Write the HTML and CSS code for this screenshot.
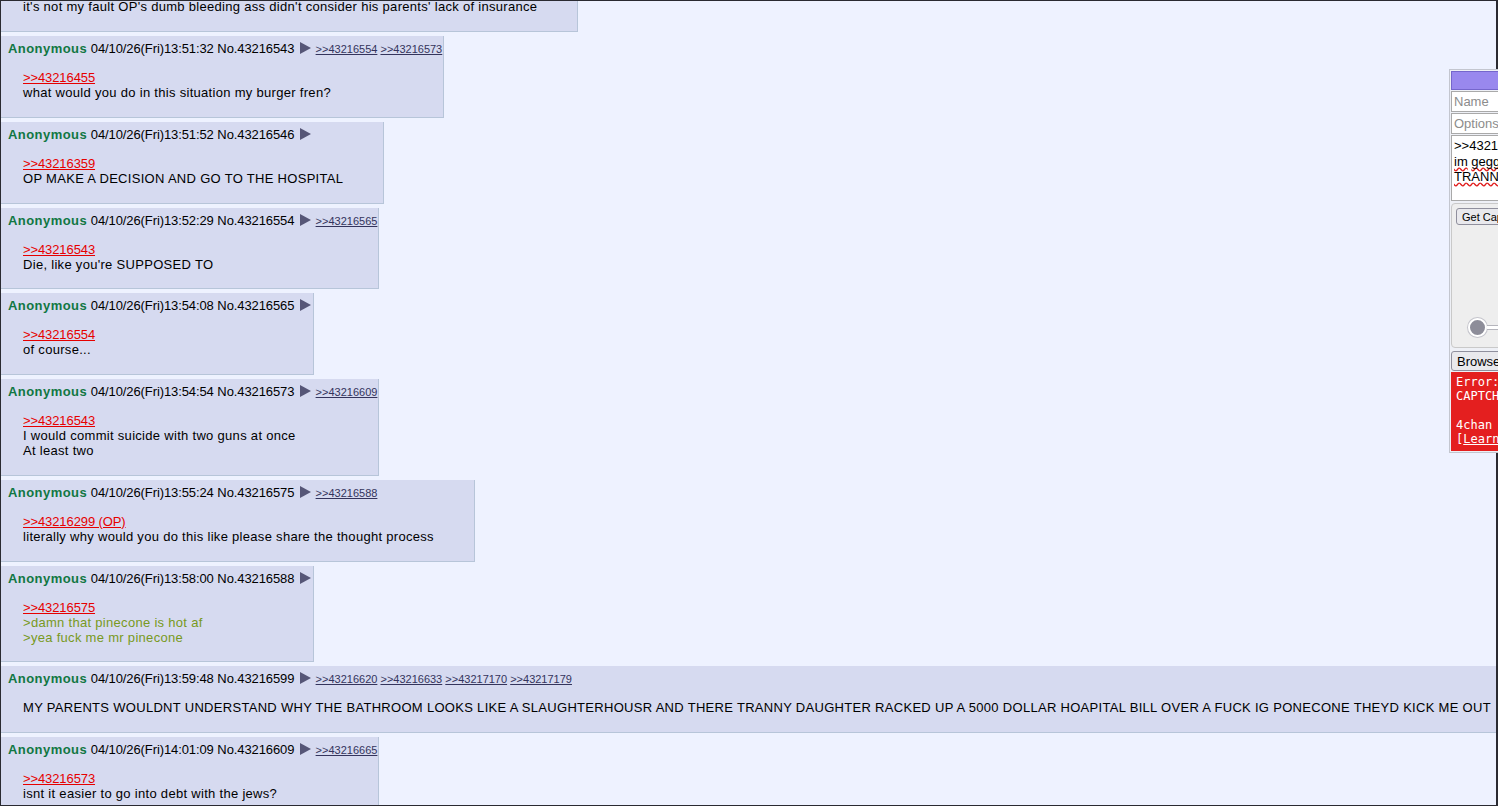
FILE: index.html
```html
<!DOCTYPE html>
<html lang="en">
    <head>
        <meta charset="UTF-8" />
        <meta name="viewport" content="width=device-width, initial-scale=1.0" />
        <title>/b/ - Random</title>
        <link rel="stylesheet" href="styles.css">
    </head>
    <body>
        <div class="page">
            <div class="thread">
                <div class="reply-wrap">
                    <div class="post">
                        <div class="post-info">
                            <span class="name">Anonymous</span>
                            <span class="date-time">04/10/26(Fri)13:50:58</span>
                            <span class="post-num">No.43216538</span>
                            <span class="menu-btn"></span>
                        </div>
                        <blockquote class="post-message">it's not my fault OP's dumb bleeding ass didn't consider his parents' lack of insurance</blockquote>
                    </div>
                </div>

                <div class="reply-wrap">
                    <div class="post">
                        <div class="post-info">
                            <span class="name">Anonymous</span>
                            <span class="date-time">04/10/26(Fri)13:51:32</span>
                            <span class="post-num">No.43216543</span>
                            <span class="menu-btn"></span>
                            <span class="backlinks"><a href="#p43216554">&gt;&gt;43216554</a> <a href="#p43216573">&gt;&gt;43216573</a></span>
                        </div>
                        <blockquote class="post-message">
                            <a class="quote-link" href="#p43216455">&gt;&gt;43216455</a><br>
                            what would you do in this situation my burger fren?
                        </blockquote>
                    </div>
                </div>

                <div class="reply-wrap">
                    <div class="post">
                        <div class="post-info">
                            <span class="name">Anonymous</span>
                            <span class="date-time">04/10/26(Fri)13:51:52</span>
                            <span class="post-num">No.43216546</span>
                            <span class="menu-btn"></span>
                        </div>
                        <blockquote class="post-message">
                            <a class="quote-link" href="#p43216359">&gt;&gt;43216359</a><br>
                            OP MAKE A DECISION AND GO TO THE HOSPITAL
                        </blockquote>
                    </div>
                </div>

                <div class="reply-wrap">
                    <div class="post">
                        <div class="post-info">
                            <span class="name">Anonymous</span>
                            <span class="date-time">04/10/26(Fri)13:52:29</span>
                            <span class="post-num">No.43216554</span>
                            <span class="menu-btn"></span>
                            <span class="backlinks"><a href="#p43216565">&gt;&gt;43216565</a></span>
                        </div>
                        <blockquote class="post-message">
                            <a class="quote-link" href="#p43216543">&gt;&gt;43216543</a><br>
                            Die, like you're SUPPOSED TO
                        </blockquote>
                    </div>
                </div>

                <div class="reply-wrap">
                    <div class="post">
                        <div class="post-info">
                            <span class="name">Anonymous</span>
                            <span class="date-time">04/10/26(Fri)13:54:08</span>
                            <span class="post-num">No.43216565</span>
                            <span class="menu-btn"></span>
                        </div>
                        <blockquote class="post-message">
                            <a class="quote-link" href="#p43216554">&gt;&gt;43216554</a><br>
                            of course...
                        </blockquote>
                    </div>
                </div>

                <div class="reply-wrap">
                    <div class="post">
                        <div class="post-info">
                            <span class="name">Anonymous</span>
                            <span class="date-time">04/10/26(Fri)13:54:54</span>
                            <span class="post-num">No.43216573</span>
                            <span class="menu-btn"></span>
                            <span class="backlinks"><a href="#p43216609">&gt;&gt;43216609</a></span>
                        </div>
                        <blockquote class="post-message">
                            <a class="quote-link" href="#p43216543">&gt;&gt;43216543</a><br>
                            I would commit suicide with two guns at once<br>
                            At least two
                        </blockquote>
                    </div>
                </div>

                <div class="reply-wrap">
                    <div class="post">
                        <div class="post-info">
                            <span class="name">Anonymous</span>
                            <span class="date-time">04/10/26(Fri)13:55:24</span>
                            <span class="post-num">No.43216575</span>
                            <span class="menu-btn"></span>
                            <span class="backlinks"><a href="#p43216588">&gt;&gt;43216588</a></span>
                        </div>
                        <blockquote class="post-message">
                            <a class="quote-link" href="#p43216299">&gt;&gt;43216299 (OP)</a><br>
                            literally why would you do this like please share the thought process
                        </blockquote>
                    </div>
                </div>

                <div class="reply-wrap">
                    <div class="post">
                        <div class="post-info">
                            <span class="name">Anonymous</span>
                            <span class="date-time">04/10/26(Fri)13:58:00</span>
                            <span class="post-num">No.43216588</span>
                            <span class="menu-btn"></span>
                        </div>
                        <blockquote class="post-message">
                            <a class="quote-link" href="#p43216575">&gt;&gt;43216575</a><br>
                            <span class="greentext">&gt;damn that pinecone is hot af</span><br>
                            <span class="greentext">&gt;yea fuck me mr pinecone</span>
                        </blockquote>
                    </div>
                </div>

                <div class="reply-wrap">
                    <div class="post">
                        <div class="post-info">
                            <span class="name">Anonymous</span>
                            <span class="date-time">04/10/26(Fri)13:59:48</span>
                            <span class="post-num">No.43216599</span>
                            <span class="menu-btn"></span>
                            <span class="backlinks"><a href="#p43216620">&gt;&gt;43216620</a> <a href="#p43216633">&gt;&gt;43216633</a> <a href="#p43217170">&gt;&gt;43217170</a> <a href="#p43217179">&gt;&gt;43217179</a></span>
                        </div>
                        <blockquote class="post-message">MY PARENTS WOULDNT UNDERSTAND WHY THE BATHROOM LOOKS LIKE A SLAUGHTERHOUSR AND THERE TRANNY DAUGHTER RACKED UP A 5000 DOLLAR HOAPITAL BILL OVER A FUCK IG PONECONE THEYD KICK ME OUT</blockquote>
                    </div>
                </div>

                <div class="reply-wrap">
                    <div class="post">
                        <div class="post-info">
                            <span class="name">Anonymous</span>
                            <span class="date-time">04/10/26(Fri)14:01:09</span>
                            <span class="post-num">No.43216609</span>
                            <span class="menu-btn"></span>
                            <span class="backlinks"><a href="#p43216665">&gt;&gt;43216665</a></span>
                        </div>
                        <blockquote class="post-message">
                            <a class="quote-link" href="#p43216573">&gt;&gt;43216573</a><br>
                            isnt it easier to go into debt with the jews?
                        </blockquote>
                    </div>
                </div>
            </div>
        </div>

        <!-- Quick Reply -->
        <div class="quick-reply">
            <div class="qr-header"></div>
            <div class="qr-field qr-placeholder">Name</div>
            <div class="qr-field qr-placeholder">Options</div>
            <div class="qr-comment">&gt;&gt;43216599<br><span class="misspelled">im</span> <span class="misspelled">gegging</span><br><span class="misspelled">TRANNY</span></div>
            <div class="qr-captcha">
                <button class="qr-button qr-small">Get Captcha</button>
                <div class="qr-slider">
                    <span class="qr-knob"></span>
                    <span class="qr-track"></span>
                </div>
            </div>
            <button class="qr-button qr-browse">Browse...</button>
            <div class="qr-error">Error: You seem to have mistyped the
CAPTCHA. Please try again.

4chan Pass users can bypass this CAPTCHA.
[<a href="#">Learn More</a>]</div>
        </div>
    </body>
</html>
```

FILE: styles.css
```css
html,
body {
    margin: 0;
    height: 100%;
    overflow: hidden;
}

body {
    background: #eef2ff;
    color: #000;
    font-family: "Liberation Sans", Arial, sans-serif;
    font-size: 13px;
}

/* Window frame */
.page {
    box-sizing: border-box;
    height: 100%;
    border-style: solid;
    border-color: #2a2a31;
    border-width: 1px 2px 1px 1px;
    overflow: hidden;
}

/* Thread, scrolled part way down */
.thread {
    margin-top: -35.75px;
}

.reply-wrap {
    margin-bottom: 4px;
}

.post {
    width: max-content;
    background: #d6daf0;
    border-right: 1px solid #b7c5d9;
    border-bottom: 1px solid #b7c5d9;
}

/* Post header */
.post-info {
    line-height: 18px;
    padding: 4px 1px 0 7px;
    white-space: nowrap;
}

.name {
    color: #117743;
    font-weight: bold;
    letter-spacing: 0.45px;
}

.date-time,
.post-num {
    letter-spacing: -0.1px;
}

.menu-btn {
    display: inline-block;
    width: 0;
    height: 0;
    margin: 0 1px 0 2px;
    border-left: 11px solid #565677;
    border-top: 6px solid transparent;
    border-bottom: 6px solid transparent;
    vertical-align: -1px;
}

.backlinks {
    font-size: 11px;
    line-height: 12px;
}

.backlinks a {
    color: #34345c;
}

/* Post body */
.post-message {
    margin: 12px 40px 16.75px 22px;
    line-height: 15px;
    letter-spacing: 0.3px;
}

.quote-link {
    color: #e60000;
    letter-spacing: -0.1px;
}

.greentext {
    color: #789922;
}

/* Quick Reply Style */
.quick-reply {
    position: fixed;
    top: 69px;
    left: 1449px;
    width: 300px;
    padding: 1px;
    background: #eef0f6;
    border: 1px solid #c3c6cf;
}

.qr-header {
    height: 17px;
    background: #9988ee;
    border: 1px solid #7566cc;
}

.qr-field {
    box-sizing: border-box;
    height: 21px;
    margin-top: 1px;
    padding: 2px 2px;
    line-height: 15px;
    background: #fff;
    border: 1px solid #a9a9a9;
}

.qr-placeholder {
    color: #8c8c8c;
}

.qr-comment {
    box-sizing: border-box;
    height: 66px;
    margin-top: 1px;
    padding: 2px 2px;
    line-height: 15.5px;
    background: #fff;
    border: 1px solid #a9a9a9;
}

.misspelled {
    text-decoration: underline wavy #e01b1b;
    text-decoration-skip-ink: none;
}

.qr-captcha {
    box-sizing: border-box;
    height: 145px;
    margin-top: 2px;
    padding: 4px 4px;
    background: #eeeeee;
    border: 1px solid #c9c9c9;
    border-radius: 4px;
}

.qr-button {
    display: block;
    box-sizing: border-box;
    margin: 0;
    padding: 0 5px;
    font-family: "Liberation Sans", Arial, sans-serif;
    color: #000;
    background: #e9e9ed;
    border: 1px solid #8f8f9d;
    border-radius: 3px;
}

.qr-small {
    height: 17px;
    font-size: 11px;
}

.qr-slider {
    display: flex;
    align-items: center;
    margin-top: 93px;
    padding-left: 12px;
}

.qr-knob {
    width: 15px;
    height: 15px;
    background: #8d8d99;
    border: 2px solid #fff;
    border-radius: 50%;
    box-shadow: 0 0 0 1px #c5c5cc;
}

.qr-track {
    flex: 1;
    height: 3px;
    background: #fff;
    border: 1px solid #b5b5bc;
    border-left: 0;
}

.qr-browse {
    width: 100%;
    height: 20px;
    margin-top: 3px;
    padding: 0 5px;
    text-align: left;
    font-size: 13px;
}

.qr-error {
    margin-top: 1px;
    padding: 3px 5px 5px;
    background: #e41f1f;
    color: #fff;
    font-family: "DejaVu Sans Mono", "Liberation Mono", monospace;
    font-size: 12px;
    line-height: 14.2px;
    white-space: pre;
}

.qr-error a {
    color: #fff;
}
```
